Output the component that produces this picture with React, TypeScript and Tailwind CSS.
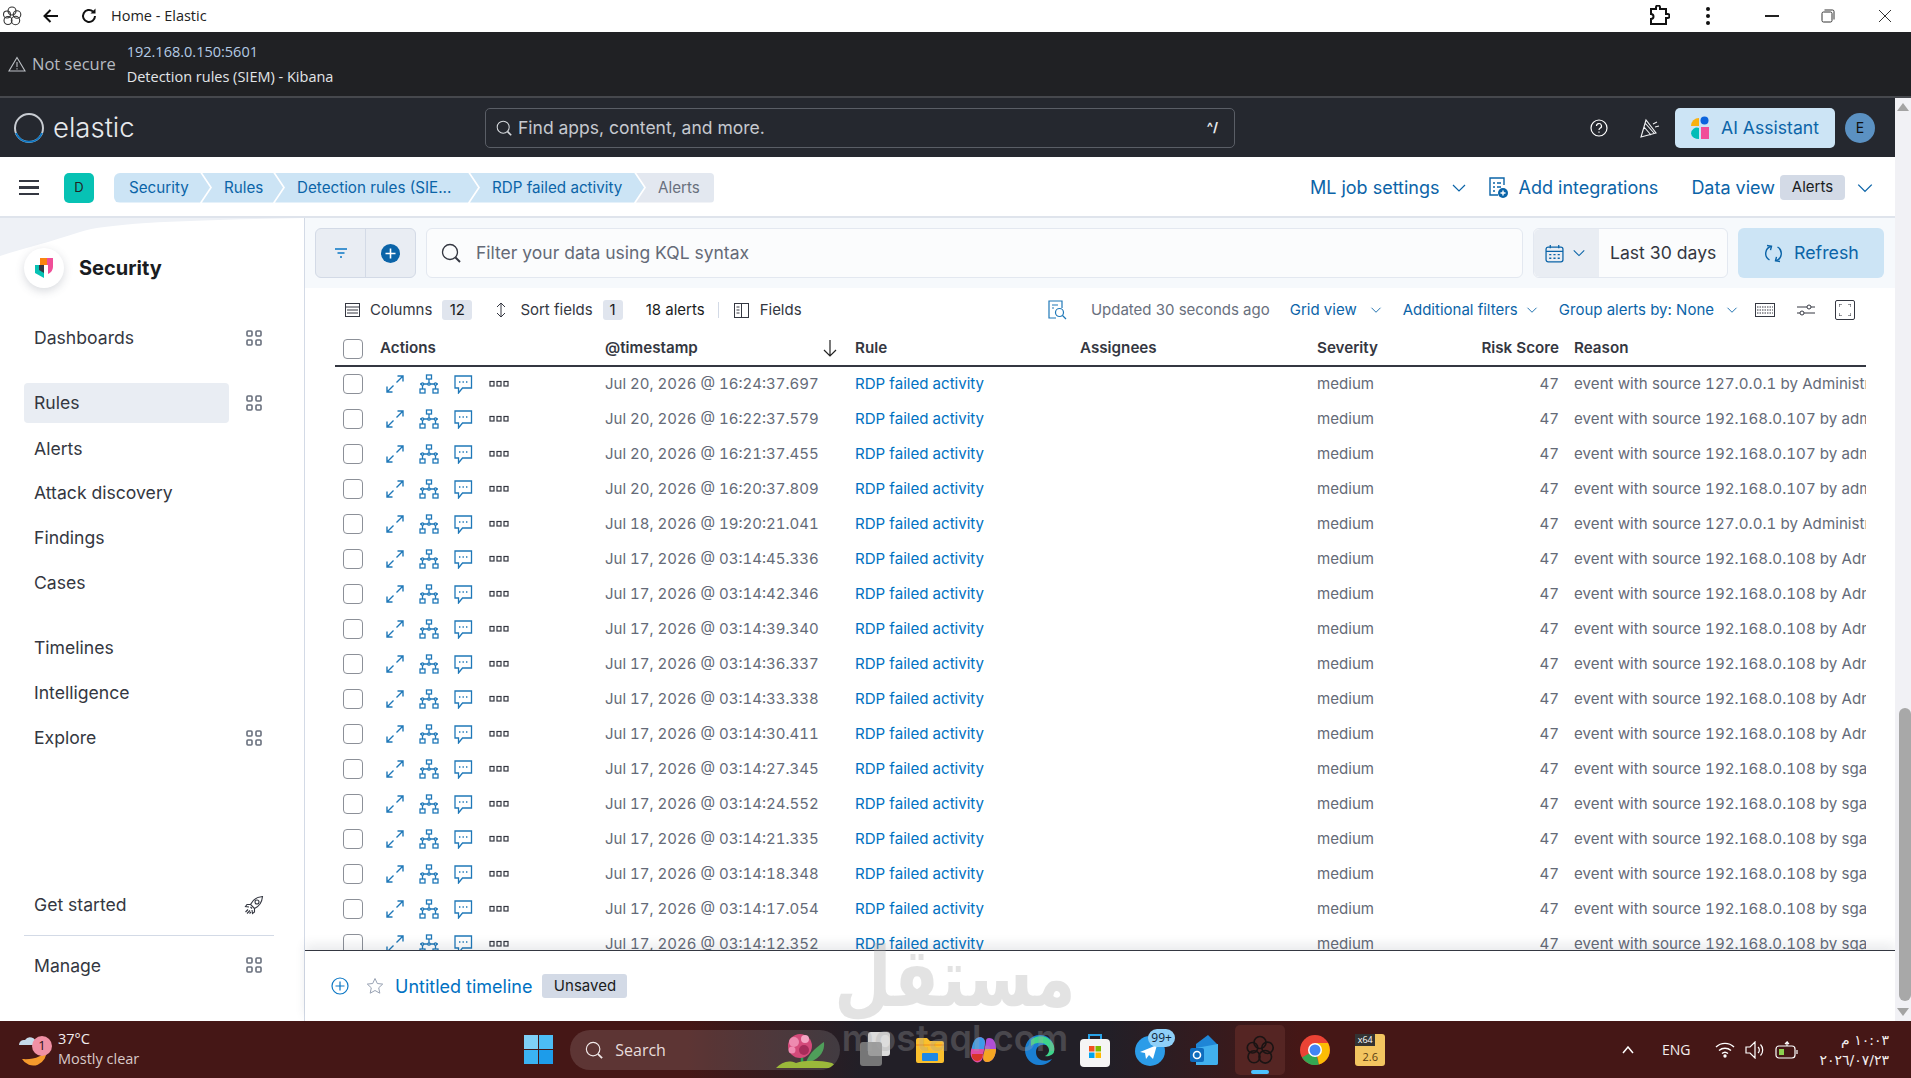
import React from "react";

const F = "font-['Inter',sans-serif]";
const W = "font-['Open_Sans','Noto_Sans',sans-serif]";

const rows: [string, string][] = [
  ["Jul 20, 2026 @ 16:24:37.697", "event with source 127.0.0.1 by Administrator"],
  ["Jul 20, 2026 @ 16:22:37.579", "event with source 192.168.0.107 by admin"],
  ["Jul 20, 2026 @ 16:21:37.455", "event with source 192.168.0.107 by admin"],
  ["Jul 20, 2026 @ 16:20:37.809", "event with source 192.168.0.107 by admin"],
  ["Jul 18, 2026 @ 19:20:21.041", "event with source 127.0.0.1 by Administrator"],
  ["Jul 17, 2026 @ 03:14:45.336", "event with source 192.168.0.108 by Administrator"],
  ["Jul 17, 2026 @ 03:14:42.346", "event with source 192.168.0.108 by Administrator"],
  ["Jul 17, 2026 @ 03:14:39.340", "event with source 192.168.0.108 by Administrator"],
  ["Jul 17, 2026 @ 03:14:36.337", "event with source 192.168.0.108 by Administrator"],
  ["Jul 17, 2026 @ 03:14:33.338", "event with source 192.168.0.108 by Administrator"],
  ["Jul 17, 2026 @ 03:14:30.411", "event with source 192.168.0.108 by Administrator"],
  ["Jul 17, 2026 @ 03:14:27.345", "event with source 192.168.0.108 by sgadmin"],
  ["Jul 17, 2026 @ 03:14:24.552", "event with source 192.168.0.108 by sgadmin"],
  ["Jul 17, 2026 @ 03:14:21.335", "event with source 192.168.0.108 by sgadmin"],
  ["Jul 17, 2026 @ 03:14:18.348", "event with source 192.168.0.108 by sgadmin"],
  ["Jul 17, 2026 @ 03:14:17.054", "event with source 192.168.0.108 by sgadmin"],
  ["Jul 17, 2026 @ 03:14:12.352", "event with source 192.168.0.108 by sgadmin"],
];

const Chevron = ({ c = "text-[#0b64a8]", s = 16 }: { c?: string; s?: number }) => (
  <svg width={s} height={s} viewBox="0 0 16 16" fill="none" stroke="currentColor" strokeWidth="1.2" className={c}>
    <path d="M2 5l6 6 6-6" />
  </svg>
);

const Apps = () => (
  <svg width="16" height="16" viewBox="0 0 16 16" fill="none" stroke="#69707d" strokeWidth="1.6">
    <rect x="1" y="1" width="5" height="5" rx="1" />
    <rect x="10" y="1" width="5" height="5" rx="1" />
    <rect x="1" y="10" width="5" height="5" rx="1" />
    <rect x="10" y="10" width="5" height="5" rx="1" />
  </svg>
);

const Glass = ({ s = 20, c = "#343741" }: { s?: number; c?: string }) => (
  <svg width={s} height={s} viewBox="0 0 20 20" fill="none" stroke={c} strokeWidth="1.3">
    <circle cx="9" cy="9" r="7.5" />
    <path d="M14.5 14.5l4.5 4.5" strokeWidth="2" />
  </svg>
);

const KibanaGlyph = ({ c = "#333", s = 20 }: { c?: string; s?: number }) => (
  <svg width={s} height={s} viewBox="0 0 20 20" fill="none" stroke={c} strokeWidth="1.1">
    <circle cx="10" cy="5" r="4" />
    <circle cx="5" cy="8.5" r="3.5" />
    <circle cx="15" cy="8.5" r="3.8" />
    <circle cx="6" cy="14.5" r="4" />
    <circle cx="13.5" cy="14.5" r="4.2" />
  </svg>
);

const Expand = () => (
  <svg width="20" height="20" viewBox="0 0 20 20" fill="none" stroke="#1f78b8" strokeWidth="1.4">
    <path d="M11.5 8.5L18 2M12.5 2H18v5.5M8.5 11.5L2 18M7.5 18H2v-5.5" />
  </svg>
);
const Tree = () => (
  <svg width="20" height="20" viewBox="0 0 20 20" fill="none" stroke="#1f78b8" strokeWidth="1.3">
    <rect x="7.5" y="1" width="5" height="4" />
    <rect x="1" y="15" width="5" height="4" />
    <rect x="14" y="15" width="5" height="4" />
    <path d="M10 5v5M1 10h18M3.5 10v5M16.5 10v5" />
    <circle cx="3.5" cy="10" r="1.2" fill="#fff" />
    <circle cx="10" cy="10" r="1.2" fill="#fff" />
    <circle cx="16.5" cy="10" r="1.2" fill="#fff" />
  </svg>
);
const Comment = () => (
  <svg width="20" height="20" viewBox="0 0 20 20" fill="none" stroke="#1f78b8" strokeWidth="1.3">
    <path d="M2 2h16.5v12H9.5L5.5 19v-5H2z" />
    <path d="M6 8h1.4M9.5 8h1.4M13 8h1.4" strokeWidth="1.6" />
  </svg>
);
const Dots = () => (
  <svg width="20" height="8" viewBox="0 0 20 8" fill="none" stroke="#343741" strokeWidth="1.2">
    <rect x="1" y="1.5" width="4" height="4.5" />
    <rect x="8" y="1.5" width="4" height="4.5" />
    <rect x="15" y="1.5" width="4" height="4.5" />
  </svg>
);

const NavItem = ({ label, apps, className = "" }: { label: string; apps?: boolean; className?: string }) => (
  <div className={`flex items-center h-[40px] ${className}`}>
    <div className="w-[222px] pl-[10px] text-[17.6px] text-[#343741]">{label}</div>
    {apps && <Apps />}
  </div>
);

const Crumb = ({ label, w, first, last }: { label: string; w: number; first?: boolean; last?: boolean }) => (
  <div
    style={{ width: w }}
    className={`h-[30px] pt-[1px] flex items-center text-[15.2px] ${last ? "bg-[#e3e8f0] text-[#69707d] pl-[22px] rounded-r-[4px] [clip-path:polygon(0_0,100%_0,100%_100%,0_100%,10px_50%)]" : ""} ${!last ? "bg-[#cce4f5] text-[#0b64a8]" : ""} ${first ? "pl-[15px] rounded-l-[6px] [clip-path:polygon(0_0,calc(100%_-_10px)_0,100%_50%,calc(100%_-_10px)_100%,0_100%)]" : ""} ${!first && !last ? "pl-[22px] [clip-path:polygon(0_0,calc(100%_-_10px)_0,100%_50%,calc(100%_-_10px)_100%,0_100%,10px_50%)]" : ""} ${first ? "" : "-ml-[8px]"}`}
  >
    {label}
  </div>
);

export default function App() {
  return (
    <div className={`w-full h-[1078px] overflow-hidden flex flex-col bg-white relative ${F}`}>
      {/* Browser title bar */}
      <div className={`h-[32px] flex items-center shrink-0 bg-white ${W}`}>
        <div className="ml-[2px] w-[22px]"><KibanaGlyph /></div>
        <svg className="ml-[18px]" width="18" height="18" viewBox="0 0 18 18" fill="none" stroke="#111" strokeWidth="2"><path d="M16 9H3M8.5 3L2.5 9l6 6" /></svg>
        <svg className="ml-[20px]" width="18" height="18" viewBox="0 0 18 18" fill="none" stroke="#111" strokeWidth="2"><path d="M15 9a6 6 0 1 1-2-4.5" /><path d="M15.5 1.5v5h-5z" fill="#111" stroke="none" /></svg>
        <span className="ml-[13px] text-[14.5px] text-[#222]">Home - Elastic</span>
        <div className="flex-1" />
        <svg width="22" height="22" viewBox="0 0 22 22" fill="none" stroke="#111" strokeWidth="2"><path d="M3 4h5V2.5a2 2 0 0 1 4 0V4h6v5h1.5a2 2 0 0 1 0 4H18v6H3v-5a2.5 2.5 0 0 0 0-5z" /></svg>
        <div className="ml-[36px] flex flex-col gap-[3px]"><i className="w-[4px] h-[4px] rounded-full bg-[#111]" /><i className="w-[4px] h-[4px] rounded-full bg-[#111]" /><i className="w-[4px] h-[4px] rounded-full bg-[#111]" /></div>
        <div className="ml-[55px] w-[14px] h-[1.5px] bg-[#222]" />
        <svg className="ml-[42px]" width="14" height="14" viewBox="0 0 14 14" fill="none" stroke="#333" strokeWidth="1"><rect x="1" y="3" width="10" height="10" rx="1.5" /><path d="M3.5 1h8a1.5 1.5 0 0 1 1.5 1.5v8" /></svg>
        <svg className="ml-[43px] mr-[19px]" width="14" height="14" viewBox="0 0 14 14" fill="none" stroke="#333" strokeWidth="1"><path d="M1 1l12 12M13 1L1 13" /></svg>
      </div>

      {/* Browser address strip */}
      <div className={`h-[66px] shrink-0 bg-[#202124] border-b-[2px] border-[#46484d] flex items-center ${W}`}>
        <svg className="ml-[8px]" width="18" height="16" viewBox="0 0 18 16" fill="none" stroke="#bcc0c5" strokeWidth="1.1"><path d="M9 1.5L1 15h16zM9 6v5M9 12.2v1.2" /></svg>
        <span className="ml-[6px] text-[16.5px] text-[#b6bac0]">Not secure</span>
        <div className="ml-[11px] flex flex-col gap-[8px] text-[14.5px] leading-[17px]">
          <span className="text-[#b4cbe4]">192.168.0.150:5601</span>
          <span className="text-[#e3e5e8]">Detection rules (SIEM) - Kibana</span>
        </div>
      </div>

      <div className="flex-1 flex min-h-0">
        <div className="flex-1 min-w-0 flex flex-col">
          {/* Elastic header */}
          <div className="h-[59px] shrink-0 bg-[#25282f] flex items-center">
            <svg className="ml-[13px]" width="32" height="32" viewBox="0 0 32 32" fill="none">
              <circle cx="16" cy="16" r="14" stroke="#c8ccd2" strokeWidth="2" />
              <path d="M3 21a14 14 0 0 0 26 0" stroke="#0b77c5" strokeWidth="2" />
            </svg>
            <span className="ml-[8px] w-[432px] text-[27.5px] text-[#e8eaed] font-light">elastic</span>
            <div className="w-[750px] h-[40px] rounded-[5px] border border-[#5a5e66] flex items-center pl-[10px] text-[17.5px] text-[#c6c9cf]">
              <Glass s={16} c="#d5d8dc" />
              <span className="ml-[6px] flex-1 pt-[1px]">Find apps, content, and more.</span>
              <span className="mr-[16px] text-[13px] font-bold text-[#e8eaed]">^/</span>
            </div>
            <div className="flex-1" />
            <svg width="18" height="18" viewBox="0 0 18 18" fill="none" stroke="#fff" strokeWidth="1.2"><circle cx="9" cy="9" r="8" /><path d="M6.5 7a2.5 2.5 0 1 1 3.5 2.3c-.7.4-1 .8-1 1.7M9 12.5v1.2" /></svg>
            <svg className="ml-[32px]" width="20" height="22" viewBox="0 0 20 22" fill="none" stroke="#f1f2f4" strokeWidth="1.1"><path d="M6 3L1 20l15-4zM4 10l7 8M5 6l9 10M12 3v.1M15 2v.1M17 6v.1M13 7l4-2M15 10l4-1" /></svg>
            <div className="ml-[15px] w-[160px] h-[40px] rounded-[5px] bg-[#cce4f5] flex items-center">
              <svg className="ml-[16px]" width="18" height="24" viewBox="0 0 18 24" fill="none">
                <path d="M8 2v8H0a8 8 0 0 1 8-8z" fill="#f9b110" />
                <circle cx="13.5" cy="4.5" r="4" fill="#0b64dd" />
                <path d="M8 12v11A8 6 0 0 1 0 17.5 6 6 0 0 1 8 12z" fill="#02bcb7" />
                <rect x="10" y="11" width="8" height="12" fill="#f04e98" />
              </svg>
              <span className="ml-[12px] pt-[1px] text-[17.6px] text-[#0b64a8]">AI Assistant</span>
            </div>
            <div className="ml-[10px] mr-[20px] w-[30px] h-[30px] rounded-full bg-[#5b91c2] flex items-center justify-center text-[14px] text-[#111]">E</div>
          </div>

          {/* Breadcrumb bar */}
          <div className="h-[61px] pt-[2px] shrink-0 border-b-[2px] border-[#dfe4ec] flex items-center bg-white">
            <div className="ml-[19px] flex flex-col gap-[4px]"><i className="w-[20px] h-[2.5px] bg-[#343741]" /><i className="w-[20px] h-[2.5px] bg-[#343741]" /><i className="w-[20px] h-[2.5px] bg-[#343741]" /></div>
            <div className="ml-[25px] w-[30px] h-[30px] rounded-[5px] bg-[#07c2b4] flex items-center justify-center text-[13px] text-[#222]">D</div>
            <div className="ml-[20px] flex items-center w-[610px]">
              <Crumb first label="Security" w={96} />
              <Crumb label="Rules" w={81} />
              <Crumb label="Detection rules (SIE..." w={203} />
              <Crumb label="RDP failed activity" w={174} />
              <Crumb last label="Alerts" w={78} />
            </div>
            <div className="flex-1" />
            <span className="text-[18px] text-[#0b64a8]">ML job settings</span>
            <div className="ml-[11px]"><Chevron /></div>
            <svg className="ml-[21px]" width="20" height="22" viewBox="0 0 20 22" fill="none" stroke="#0b64a8" strokeWidth="1.4"><path d="M16 8V1H2v17h8M5 6h2M9 6h4M5 10h2M9 10h4M5 14h2" /><circle cx="15" cy="16" r="5" fill="#0b64a8" stroke="none" /><path d="M15 13.5v5M12.5 16h5" stroke="#fff" /></svg>
            <span className="ml-[11px] text-[18px] text-[#0b64a8]">Add integrations</span>
            <span className="ml-[33px] text-[18px] text-[#0b64a8]">Data view</span>
            <div className="ml-[5px] w-[65px] h-[25px] rounded-[4px] bg-[#d3dae6] flex items-center justify-center text-[15px] text-[#1a1c21]">Alerts</div>
            <div className="ml-[11px] mr-[21px]"><Chevron s={18} /></div>
          </div>

          <div className="flex-1 flex min-h-0">
            {/* Sidebar */}
            <aside className="w-[305px] shrink-0 border-r border-[#d3dae6] flex flex-col relative overflow-hidden bg-white">
              <svg className="absolute left-0 top-0" width="304" height="40" viewBox="0 0 304 40"><path d="M0 0h304C200 2 110 4 80 14 50 24 25 30 0 38z" fill="#eef1f6" /></svg>
              <div className="relative mt-[30px] ml-[24px] flex items-center h-[40px]">
                <div className="w-[40px] h-[40px] rounded-full bg-white shadow-[0_3px_10px_rgba(60,70,90,0.2)] flex items-center justify-center">
                  <svg width="18" height="20" viewBox="0 0 18 20"><path d="M5 0h13v9a8 8 0 0 1-5 7V7H5z" fill="#f04e98" /><path d="M5 0h7v7H5z" fill="#f98510" /><path d="M0 7h9v13L0 15z" fill="#07c2b4" /><path d="M4 7h5v8L4 12z" fill="#343741" /></svg>
                </div>
                <span className="ml-[15px] text-[20px] font-bold text-[#1a1c21]">Security</span>
              </div>
              <div className="relative ml-[24px] mt-[30px]">
                <NavItem label="Dashboards" />
              </div>
              <div className="relative ml-[24px] mt-[25px] flex items-center">
                <div className="w-[205px] h-[40px] rounded-[4px] bg-[#e9edf3] flex items-center pl-[10px] text-[17.6px] text-[#343741]">Rules</div>
                <div className="ml-[17px]"><Apps /></div>
              </div>
              <div className="relative ml-[24px] mt-[6px]"><NavItem label="Alerts" /></div>
              <div className="relative ml-[24px] mt-[4px]"><NavItem label="Attack discovery" /></div>
              <div className="relative ml-[24px] mt-[5px]"><NavItem label="Findings" /></div>
              <div className="relative ml-[24px] mt-[5px]"><NavItem label="Cases" /></div>
              <div className="relative ml-[24px] mt-[25px]"><NavItem label="Timelines" /></div>
              <div className="relative ml-[24px] mt-[5px]"><NavItem label="Intelligence" /></div>
              <div className="relative ml-[24px] mt-[5px]"><NavItem label="Explore" apps /></div>
              <div className="relative ml-[24px] mt-[127px] flex items-center h-[40px]">
                <div className="w-[220px] pl-[10px] text-[17.6px] text-[#343741]">Get started</div>
                <svg width="20" height="20" viewBox="0 0 20 20" fill="none" stroke="#343741" strokeWidth="1.1"><path d="M6.5 9.5C9 4 13 2 18.5 1.5 18 7 16 11 10.5 13.5z" /><circle cx="13" cy="7" r="2" /><path d="M6.5 9.5L3 9.5 1.5 11.5 5 12M10.5 13.5L10.5 17 8.5 18.5 8 15M6.5 12L8 13.5M4 14.5l-2.5 2.5M6 15.5l-3 3M7 17l-1.5 1.5" /></svg>
              </div>
              <div className="ml-[24px] mt-[10px] w-[250px] h-[1px] bg-[#d3dae6]" />
              <div className="relative ml-[24px] mt-[10px]"><NavItem label="Manage" /></div>
              <div className="absolute left-[246px] top-[112px]"><Apps /></div>
              <div className="absolute left-[246px] top-[739px]"><Apps /></div>
            </aside>

            {/* Main */}
            <main className="flex-1 min-w-0 flex flex-col relative">
              {/* Query bar */}
              <div className="h-[70px] shrink-0 bg-[#f6f9fc] flex items-center pl-[10px]">
                <div className="w-[101px] h-[50px] rounded-[6px] border border-[#d3dae6] bg-[#e9edf3] flex items-center">
                  <div className="w-[50px] h-full border-r border-[#d3dae6] flex items-center justify-center">
                    <svg width="14" height="10" viewBox="0 0 14 10" stroke="#0b77c5" strokeWidth="1.4"><path d="M1 1h12M3.5 5h7M6 9h2" /></svg>
                  </div>
                  <div className="flex-1 flex items-center justify-center">
                    <svg width="19" height="19" viewBox="0 0 19 19"><circle cx="9.5" cy="9.5" r="9.5" fill="#0b64a8" /><path d="M9.5 4.5v10M4.5 9.5h10" stroke="#fff" strokeWidth="1.6" /></svg>
                  </div>
                </div>
                <div className="ml-[10px] w-[1097px] h-[50px] rounded-[6px] border border-[#e3e8f0] bg-[#fbfcfd] flex items-center pl-[14px]">
                  <Glass />
                  <span className="ml-[15px] pt-[1px] text-[17.5px] text-[#646a77]">Filter your data using KQL syntax</span>
                </div>
                <div className="ml-[10px] w-[195px] h-[50px] rounded-[6px] border border-[#e3e8f0] flex items-center bg-[#fbfcfd]">
                  <div className="w-[65px] h-full bg-[#e9edf3] rounded-l-[6px] flex items-center pl-[11px] gap-[8px]">
                    <svg width="19" height="19" viewBox="0 0 18 18" fill="none" stroke="#0b64a8" strokeWidth="1.2"><rect x="1" y="3" width="16" height="14" rx="2" /><path d="M1 7h16M5 1v3M13 1v3M4 10h2M8 10h2M12 10h2M4 13.5h2M8 13.5h2M12 13.5h2" /></svg>
                    <Chevron s={14} />
                  </div>
                  <span className="ml-[11px] pt-[1px] text-[17.6px] text-[#343741]">Last 30 days</span>
                </div>
                <div className="ml-[10px] w-[146px] h-[50px] rounded-[6px] bg-[#cce4f5] flex items-center pl-[26px] gap-[11px] text-[17.8px] text-[#0b64a8]">
                  <svg width="19" height="19" viewBox="0 0 19 19" fill="none" stroke="#0b64a8" strokeWidth="1.4"><path d="M7.5 2.2A7.5 7.5 0 0 0 5.5 16M11.5 16.8A7.5 7.5 0 0 0 13.5 3" /><path d="M3 1.5l4.5.7-1 4M16 17.5l-4.5-.7 1-4" /></svg>
                  Refresh
                </div>
              </div>

              {/* Toolbar */}
              <div className="h-[44px] shrink-0 flex items-center text-[15px] text-[#343741] pl-[40px] pr-[40px]">
                <svg width="15" height="14" viewBox="0 0 15 14" fill="none" stroke="#343741" strokeWidth="1"><rect x="0.5" y="0.5" width="14" height="13" /><path d="M1 4h13M2 7h11M2 10h11" /></svg>
                <span className="ml-[10px]">Columns</span>
                <span className="ml-[10px] w-[30px] h-[20px] rounded-[3px] bg-[#e0e5ee] flex items-center justify-center text-[#1a1c21] text-[15px]">12</span>
                <svg className="ml-[24px]" width="10" height="16" viewBox="0 0 10 16" fill="none" stroke="#343741" strokeWidth="1"><path d="M1 5l4-4 4 4M1 11l4 4 4-4M5 1v14" /></svg>
                <span className="ml-[14px]">Sort fields</span>
                <span className="ml-[10px] w-[20px] h-[20px] rounded-[3px] bg-[#e0e5ee] flex items-center justify-center text-[#1a1c21]">1</span>
                <span className="ml-[23px] text-[#1a1c21]">18 alerts</span>
                <i className="ml-[13px] w-[1px] h-[16px] bg-[#d3dae6]" />
                <svg className="ml-[15px]" width="15" height="15" viewBox="0 0 15 15" fill="none" stroke="#343741" strokeWidth="1"><rect x="0.5" y="0.5" width="14" height="14" /><path d="M7.5 0v15M2.5 4h3M2.5 7h3M2.5 10h3" /></svg>
                <span className="ml-[11px]">Fields</span>
                <div className="flex-1" />
                <svg width="20" height="20" viewBox="0 0 20 20" fill="none" stroke="#1f78b8" strokeWidth="1.2"><path d="M9 18H2V1h13v7M5 5h6M5 8h2" /><circle cx="12.5" cy="12.5" r="4" /><path d="M15.5 15.5L19 19" /></svg>
                <span className="ml-[24px] text-[#69707d]">Updated 30 seconds ago</span>
                <span className="ml-[20px] text-[#0b64a8]">Grid view</span>
                <div className="ml-[13px]"><Chevron s={12} /></div>
                <span className="ml-[21px] text-[#0b64a8]">Additional filters</span>
                <div className="ml-[8px]"><Chevron s={12} /></div>
                <span className="ml-[21px] text-[#0b64a8]">Group alerts by: None</span>
                <div className="ml-[12px]"><Chevron s={12} /></div>
                <svg className="ml-[17px]" width="20" height="14" viewBox="0 0 20 14" fill="none" stroke="#343741" strokeWidth="1"><rect x="0.5" y="0.5" width="19" height="13" /><path d="M2 4h16M2 7h16M2 10h16" strokeDasharray="1.5 1" /></svg>
                <svg className="ml-[22px]" width="18" height="14" viewBox="0 0 18 14" fill="none" stroke="#343741" strokeWidth="1"><path d="M0 4h10M14 4h4M0 10h3M7 10h11" /><circle cx="12" cy="4" r="2" /><circle cx="5" cy="10" r="2" /></svg>
                <div className="ml-[20px] w-[20px] h-[20px] border border-[#343741] rounded-[2px] flex items-center justify-center">
                  <svg width="12" height="12" viewBox="0 0 12 12" fill="none" stroke="#343741"><path d="M0 3V0h3M9 0h3v3M12 9v3H9M3 12H0V9" /></svg>
                </div>
              </div>

              {/* Grid */}
              <div className="flex-1 min-h-0 overflow-hidden pl-[30px] pr-[29px] text-[15.1px] tabular-nums">
                <div className="flex items-center h-[35px] border-b-[2px] border-[#343741] font-semibold text-[#343741] text-[15.2px]">
                  <div className="w-[45px] pl-[8px] shrink-0"><div className="w-[20px] h-[20px] rounded-[4px] border border-[#8c9098] bg-white" /></div>
                  <div className="w-[225px] shrink-0">Actions</div>
                  <div className="w-[250px] shrink-0 flex items-center justify-between pr-[18px]">
                    <span>@timestamp</span>
                    <svg width="14" height="18" viewBox="0 0 14 18" fill="none" stroke="#222" strokeWidth="1.2"><path d="M7 1v16M1 11l6 6 6-6" /></svg>
                  </div>
                  <div className="w-[225px] shrink-0">Rule</div>
                  <div className="w-[237px] shrink-0">Assignees</div>
                  <div className="w-[130px] shrink-0">Severity</div>
                  <div className="w-[112px] shrink-0 text-right">Risk Score</div>
                  <div className="pl-[15px] flex-1">Reason</div>
                </div>
                {rows.map(([ts, reason], i) => (
                  <div key={i} className="flex items-center h-[35px] text-[#646a77]">
                    <div className="w-[45px] pl-[8px] pb-[1px] shrink-0"><div className="w-[20px] h-[20px] rounded-[4px] border border-[#8c9098] bg-white" /></div>
                    <div className="w-[225px] pb-[1px] shrink-0 flex items-center pl-[5px]">
                      <Expand />
                      <div className="ml-[14px]"><Tree /></div>
                      <div className="ml-[14px]"><Comment /></div>
                      <div className="ml-[16px]"><Dots /></div>
                    </div>
                    <div className="w-[250px] shrink-0 text-[15px]">{ts}</div>
                    <div className="w-[225px] shrink-0 text-[#0071c2]">RDP failed activity</div>
                    <div className="w-[237px] shrink-0" />
                    <div className="w-[130px] shrink-0">medium</div>
                    <div className="w-[112px] shrink-0 text-right">47</div>
                    <div className="pl-[15px] flex-1 min-w-0 overflow-hidden whitespace-nowrap tracking-[0.05px]">{reason}</div>
                  </div>
                ))}
              </div>

              {/* Timeline bar */}
              <div className="h-[71px] shrink-0 bg-white border-t-[1.5px] border-[#343741] shadow-[0_-6px_10px_rgba(60,70,90,0.1)] flex items-center pl-[26px] relative">
                <svg width="18" height="18" viewBox="0 0 18 18" fill="none" stroke="#0b77c5" strokeWidth="1.2"><circle cx="9" cy="9" r="8" /><path d="M9 4.5v9M4.5 9h9" /></svg>
                <svg className="ml-[17px]" width="18" height="18" viewBox="0 0 18 18" fill="none" stroke="#98a2b3" strokeWidth="1"><path d="M9 1.5l2.3 5 5.4.6-4 3.7 1.1 5.4L9 13.5l-4.8 2.7 1.1-5.4-4-3.7 5.4-.6z" /></svg>
                <span className="ml-[11px] text-[18px] text-[#0071c2]">Untitled timeline</span>
                <span className="ml-[10px] w-[85px] h-[24px] rounded-[3px] bg-[#d3dae6] flex items-center justify-center text-[15px] text-[#1a1c21]">Unsaved</span>
              </div>
            </main>
          </div>
        </div>

        {/* Scrollbar */}
        <div className="w-[16px] shrink-0 bg-[#f1f1f5] flex flex-col items-center justify-between py-[5px] relative">
          <i className="w-0 h-0 border-x-[6px] border-x-transparent border-b-[8px] border-b-[#a3a3a3]" />
          <div className="absolute left-[4px] top-[610px] w-[12px] h-[293px] rounded-[6px] bg-[#a8a8a8]" />
          <i className="w-0 h-0 border-x-[6px] border-x-transparent border-t-[8px] border-t-[#a3a3a3]" />
        </div>
      </div>

      {/* Taskbar */}
      <div className={`h-[57px] shrink-0 bg-[linear-gradient(90deg,#451716_0%,#451716_36%,#221f27_45%,#221f27_58%,#451716_68%,#451716_100%)] flex items-center text-[#f3eeee] ${W}`}>
        <div className="relative ml-[19px] w-[34px] h-[42px]">
          <svg width="30" height="42" viewBox="0 0 30 42">
            <path d="M3 30a13 13 0 0 0 24-9c-2 6-12 10-24 9z" fill="#f59a2c" />
            <path d="M0 16a5 5 0 0 1 6-5 6 6 0 0 1 11 3v2z" fill="#c6dbea" />
          </svg>
          <span className="absolute left-[13px] top-[7px] w-[20px] h-[20px] rounded-full bg-[#f090a4] text-[#2a1010] text-[13px] flex items-center justify-center">1</span>
        </div>
        <div className="ml-[5px] flex flex-col text-[14.5px] leading-[20px] -mt-[1px]">
          <span>37°C</span>
          <span className="text-[#d9c9c8]">Mostly clear</span>
        </div>
        <div className="ml-[385px] grid grid-cols-2 gap-[1px] w-[29px] h-[29px]">
          <i className="bg-[#7fd0f7]" /><i className="bg-[#4cbdf5]" /><i className="bg-[#3bb3f3]" /><i className="bg-[#1d9cea]" />
        </div>
        <div className="ml-[17px] w-[270px] h-[40px] rounded-full bg-[rgba(255,255,255,0.13)] flex items-center pl-[15px] relative overflow-hidden">
          <Glass s={18} c="#f0e8e8" />
          <span className="ml-[12px] text-[16px] text-[#e7dddc]">Search</span>
          <svg className="absolute right-[2px] top-[2px]" width="62" height="36" viewBox="0 0 62 36">
            <path d="M26 24v10" stroke="#2e9e4f" strokeWidth="2.5" />
            <path d="M30 30C34 20 42 14 48 10c1 8-3 16-14 20z" fill="#4f9e5a" />
            <path d="M0 36c6-6 12-8 20-5 8-3 24-3 36 0 2 1 3 3 3 5z" fill="#9bb83a" />
            <circle cx="24" cy="14" r="12" fill="#d44a7a" /><circle cx="18" cy="10" r="5" fill="#ee8ab0" /><circle cx="28" cy="18" r="5" fill="#a62c5a" /><circle cx="29" cy="7" r="4" fill="#f4a4c2" /><circle cx="16" cy="18" r="3.5" fill="#f08ab2" />
          </svg>
        </div>
        <div className="ml-[20px] w-[30px] h-[36px] relative">
          <i className="absolute left-[8px] top-0 w-[22px] h-[24px] rounded-[3px] bg-[#dcdcdc]" />
          <i className="absolute left-0 top-[10px] w-[22px] h-[24px] rounded-[3px] bg-[rgba(140,140,140,0.8)]" />
        </div>
        <svg className="ml-[25px]" width="30" height="30" viewBox="0 0 30 30"><path d="M1 5a2 2 0 0 1 2-2h9l3 3h12a2 2 0 0 1 2 2v18a2 2 0 0 1-2 2H3a2 2 0 0 1-2-2z" fill="#fbc02d" /><path d="M1 9h28v2H1z" fill="#f5a623" /><rect x="7" y="18" width="16" height="8" rx="1" fill="#1e88e5" /></svg>
        <svg className="ml-[25px]" width="28" height="30" viewBox="0 0 28 30"><path d="M7 3c4-2 8 0 8 5l-2 14c-1 6-7 7-10 3-3-4-3-8-1-13z" fill="#e04da6" /><path d="M7 3c4-2 8 0 8 5l-1 6H2c0-5 2-9 5-11z" fill="#3d9be9" /><path d="M2 22c1 4 7 6 10 1l1-4H2z" fill="#d8352a" /><path d="M19 3c5 0 7 5 7 10s-2 14-9 14c-5 0-4-6-3-9l2-12c0-2 1-3 3-3z" fill="#b04fd6" /><path d="M15 14h11c0 6-3 13-9 13-5 0-4-6-3-9z" fill="#f5a623" /></svg>
        <svg className="ml-[27px]" width="30" height="32" viewBox="0 0 30 32"><path d="M15 1C6 1 0 8 0 16s6 15 14 15c6 0 10-2 13-6-8 4-16 1-16-7 0-5 4-8 9-7 4 0 7 2 9 4C29 7 23 1 15 1z" fill="#1a7fd3" /><path d="M6 6C10 2 20 0 26 7c3 3 4 7 3 11-1 3-6 5-9 4 4-2 5-6 3-9-3-5-11-6-17-1z" fill="#3ed48a" /></svg>
        <svg className="ml-[25px]" width="30" height="34" viewBox="0 0 30 34"><path d="M9 6V2h12v4" fill="none" stroke="#29a3e8" strokeWidth="2" /><rect x="0" y="6" width="30" height="28" rx="4" fill="#f5f5f5" /><rect x="9" y="13" width="5.5" height="5.5" fill="#f25022" /><rect x="15.5" y="13" width="5.5" height="5.5" fill="#7fba00" /><rect x="9" y="19.5" width="5.5" height="5.5" fill="#00a4ef" /><rect x="15.5" y="19.5" width="5.5" height="5.5" fill="#ffb900" /></svg>
        <div className="ml-[25px] relative w-[40px] h-[42px]">
          <svg className="absolute left-0 top-[6px]" width="30" height="36" viewBox="0 0 30 36"><circle cx="15" cy="16" r="15" fill="#2c9ce8" /><path d="M5 17l17-7-4 14-4-4-3 4-1-6z" fill="#fff" /></svg>
          <span className="absolute left-[13px] top-0 px-[3px] h-[18px] rounded-[9px] bg-[#8fd0f8] text-[#10263a] text-[12px] leading-[18px]">99+</span>
        </div>
        <svg className="ml-[15px]" width="28" height="32" viewBox="0 0 28 32"><path d="M6 10L18 1l10 10v18a2 2 0 0 1-2 2H6z" fill="#1f86d6" /><path d="M6 14l22-4v19a2 2 0 0 1-2 2H6z" fill="#41b0ee" /><rect x="0" y="14" width="14" height="14" rx="2" fill="#0f6cbd" /><circle cx="7" cy="21" r="3.5" fill="none" stroke="#fff" strokeWidth="1.6" /></svg>
        <div className="ml-[17px] w-[50px] h-[50px] rounded-[5px] bg-[#552523] flex flex-col items-center justify-center relative">
          <KibanaGlyph c="#1b1414" s={30} />
          <i className="absolute bottom-[1px] w-[18px] h-[4px] rounded-full bg-[#4cc2ff]" />
        </div>
        <svg className="ml-[15px]" width="30" height="30" viewBox="0 0 30 30"><circle cx="15" cy="15" r="15" fill="#ea4335" /><path d="M15 15L2 22.5A15 15 0 0 0 19 29.5z" fill="#34a853" /><path d="M15 8h13a15 15 0 0 1-9 21.5z" fill="#fbbc05" /><circle cx="15" cy="15" r="7" fill="#fff" /><circle cx="15" cy="15" r="5.5" fill="#4285f4" /></svg>
        <div className="ml-[25px] w-[30px] h-[32px] rounded-[3px] bg-[#f3c560] relative flex items-end justify-center text-[11px] text-[#5a3b10]">
          <span className="absolute left-0 top-0 w-[20px] h-[12px] bg-[#333] text-white text-[9px] leading-[12px] text-center">x64</span>
          2.6
        </div>
        <div className="flex-1" />
        <svg width="12" height="8" viewBox="0 0 12 8" fill="none" stroke="#fff" strokeWidth="1.5"><path d="M1 7l5-6 5 6" /></svg>
        <span className="ml-[28px] text-[14px]">ENG</span>
        <svg className="ml-[25px]" width="20" height="16" viewBox="0 0 20 16" fill="none" stroke="#fff" strokeWidth="1.4"><path d="M1 5a13 13 0 0 1 18 0M4 8.5a9 9 0 0 1 12 0M7 11.5a4.5 4.5 0 0 1 6 0" /><circle cx="10" cy="14" r="1" fill="#fff" /></svg>
        <svg className="ml-[10px]" width="20" height="18" viewBox="0 0 20 18" fill="none" stroke="#fff" strokeWidth="1.2"><path d="M1 6h4l5-5v16l-5-5H1zM13 6a4 4 0 0 1 0 6M15.5 3.5a8 8 0 0 1 0 11" /></svg>
        <svg className="ml-[10px]" width="24" height="18" viewBox="0 0 24 18" fill="none" stroke="#fff" strokeWidth="1.2"><rect x="1" y="5" width="19" height="12" rx="3" /><rect x="4" y="8" width="5" height="6" fill="#8bd14f" stroke="none" /><path d="M22 9v4M12 5V1l-2 2M12 1l2 2" /></svg>
        <div dir="rtl" className="ml-[20px] mr-[22px] flex flex-col items-start text-[14px] leading-[20px] font-['DejaVu_Sans',sans-serif]">
          <span>١٠:٠٣ م</span>
          <span>٢٠٢٦/٠٧/٢٣</span>
        </div>
      </div>

      {/* Watermark */}
      <div className="absolute left-[835px] top-[938px] w-[240px] flex flex-col items-center pointer-events-none text-[#a5a5a5] opacity-30">
        <span className="text-[66px] leading-[80px] font-bold scale-y-125 font-['DejaVu_Sans',sans-serif]">مستقل</span>
        <span className="text-[36px] leading-[40px] font-semibold font-['Inter',sans-serif]">mostaql.com</span>
      </div>
    </div>
  );
}
